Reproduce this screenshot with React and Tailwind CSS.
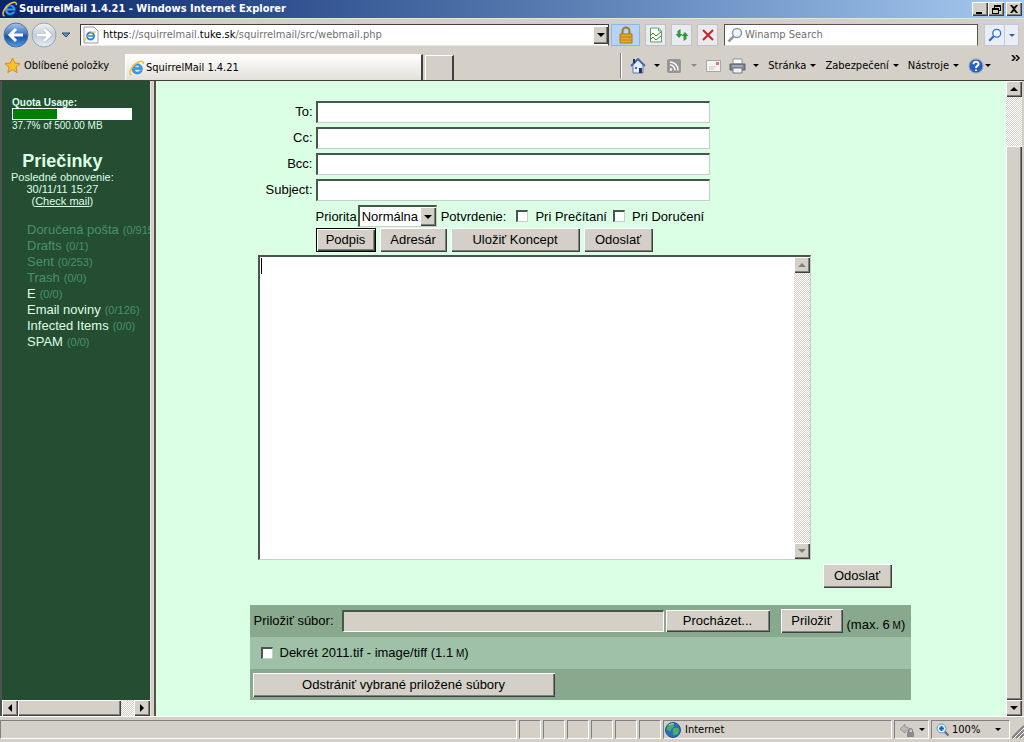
import { useState } from 'react';

const RAISED = 'bg-[#d4d0c8] shadow-[inset_1px_1px_0_#fff,inset_-1px_-1px_0_#404040,inset_-2px_-2px_0_#808080]';
const SUNKEN = 'bg-white border-t-2 border-l-2 border-t-[#46574b] border-l-[#46574b] border-b border-r border-b-[#c4cfc6] border-r-[#c4cfc6]';
const HATCH = 'bg-[repeating-conic-gradient(#fff_0_25%,#d4d0c8_0_50%)] bg-[length:2px_2px]';

const FOLDERS = [
  { name: 'Doručená pošta', count: '(0/915)', special: true },
  { name: 'Drafts', count: '(0/1)', special: true },
  { name: 'Sent', count: '(0/253)', special: true },
  { name: 'Trash', count: '(0/0)', special: true },
  { name: 'E', count: '(0/0)' },
  { name: 'Email noviny', count: '(0/126)' },
  { name: 'Infected Items', count: '(0/0)' },
  { name: 'SPAM', count: '(0/0)' },
];

const FIELDS = [
  { id: 'to', label: 'To:' },
  { id: 'cc', label: 'Cc:' },
  { id: 'bcc', label: 'Bcc:' },
  { id: 'subject', label: 'Subject:' },
];

export default function App() {
  return (
    <div className="min-h-screen flex flex-col bg-[#d4d0c8] text-black text-[11px] leading-[14px] font-['DejaVu_Sans_Condensed','DejaVu_Sans',sans-serif]">
      <TitleBar />
      <AddressBar />
      <CommandBar />
      <div className="flex-1 flex border-t border-[#404040] font-['Liberation_Sans',Arial,sans-serif]">
        <Sidebar />
        <div className="w-[6px] shrink-0 border-l border-r-2 border-l-[#e8e4dc] border-r-[#57504b]" />
        <Compose />
        <div className="w-4 shrink-0 mr-[2px] flex flex-col">
          <ScrollButton dir="up" label="Scroll up" />
          <div className={`h-[49px] ${HATCH}`} />
          <div className={`flex-1 ${RAISED}`} />
          <ScrollButton dir="down" label="Scroll down" />
        </div>
      </div>
      <StatusBar />
    </div>
  );
}

function TitleBar() {
  return (
    <header className="h-[18px] flex items-center pl-[2px] pr-[2px] bg-linear-to-r from-[#0a246a] to-[#a6caf0]">
      <IeLogo className="w-4 h-4" />
      <h1 className="ml-px flex-1 text-white font-bold whitespace-nowrap">SquirrelMail 1.4.21 - Windows Internet Explorer</h1>
      <div className="flex">
        <WindowButton label="Minimize"><path d="M3 9h6v2H3z" /></WindowButton>
        <WindowButton label="Restore"><path d="M5 2h7v6h-2V7h1V4H6v1H5zM3 5h7v6H3zm1 2v3h5V7z" fillRule="evenodd" /></WindowButton>
        <span className="w-[2px]" />
        <WindowButton label="Close"><path d="M3 2h2l2 2 2-2h2L8 6l3 4H9L7 8l-2 2H3l3-4z" /></WindowButton>
      </div>
    </header>
  );
}

function WindowButton({ label, children }) {
  return (
    <button aria-label={label} className={`w-4 h-[14px] flex items-center justify-center ${RAISED}`}>
      <svg viewBox="0 0 14 13" className="w-[14px] h-[13px]">{children}</svg>
    </button>
  );
}

function AddressBar() {
  return (
    <div className="h-[33px] flex items-center pl-[3px] pr-[5px] border-t border-[#e6e3dc]">
      <button aria-label="Back">
        <svg viewBox="0 0 26 26" className="w-[26px] h-[26px]">
          <defs>
            <linearGradient id="back" x1="0" y1="0" x2="0" y2="1">
              <stop offset="0" stopColor="#a9c8ee" />
              <stop offset=".45" stopColor="#3f77c4" />
              <stop offset=".55" stopColor="#1a4fa4" />
              <stop offset="1" stopColor="#4aa0ea" />
            </linearGradient>
          </defs>
          <circle cx="13" cy="13" r="12" fill="url(#back)" stroke="#5d7294" />
          <path d="M13 7l-6 6 6 6M7.500 13H20" stroke="#fff" strokeWidth="3" fill="none" />
        </svg>
      </button>
      <button aria-label="Forward" className="ml-[2px]">
        <svg viewBox="0 0 26 26" className="w-[26px] h-[26px]">
          <defs>
            <linearGradient id="forward" x1="0" y1="0" x2="0" y2="1">
              <stop offset="0" stopColor="#f2f5f9" />
              <stop offset=".5" stopColor="#c3ccd8" />
              <stop offset="1" stopColor="#e6edf5" />
            </linearGradient>
          </defs>
          <circle cx="13" cy="13" r="12" fill="url(#forward)" stroke="#9aa3ae" />
          <path d="M13 7l6 6-6 6M18.500 13H6" stroke="#9ba6b3" strokeWidth="4" fill="none" />
          <path d="M13 7l6 6-6 6M18.500 13H6" stroke="#fff" strokeWidth="3" fill="none" />
        </svg>
      </button>
      <button aria-label="Recent pages" className="ml-1">
        <svg viewBox="0 0 10 6" className="w-[10px] h-[6px]"><path d="M1 1h8L5 5z" fill="#5b9bd0" stroke="#24486f" /></svg>
      </button>

      <div className="ml-[9px] flex-1 h-[22px] flex items-center bg-white border border-[#404040] border-b-[#e8e8e8]">
        <svg viewBox="0 0 16 18" className="w-4 h-[18px] ml-[2px] shrink-0">
          <path d="M1 1h10l4 4v12H1z" fill="#fff" stroke="#9a9a9a" />
          <circle cx="7.500" cy="10" r="3.500" fill="none" stroke="#2f86cf" strokeWidth="2" />
          <path d="M4 10h7" stroke="#2f86cf" strokeWidth="1.500" />
          <path d="M2 15C2 11 8 5 13 6" stroke="#e5b93a" fill="none" />
        </svg>
        <div className="ml-1 flex-1 whitespace-nowrap text-[#707070]">
          <span className="text-black">https</span>://squirrelmail.<span className="text-black">tuke.sk</span>/squirrelmail/src/webmail.php
        </div>
        <button aria-label="Show addresses" className={`w-[15px] h-[18px] flex items-center justify-center ${RAISED}`}>
          <Arrow />
        </button>
      </div>
      <button aria-label="Security report" className="ml-[2px] w-[29px] h-[22px] flex items-center justify-center bg-[#b5d4f8] border border-[#8fb6e6]">
        <svg viewBox="0 0 14 18" className="w-[14px] h-[18px]">
          <path d="M3.500 9V5a3.500 3.500 0 017 0v4" fill="none" stroke="#a87b1a" strokeWidth="2" />
          <path d="M1 8h12v9H1z" fill="#e7ac2e" stroke="#a97612" />
          <path d="M1.500 11h11M1.500 14h11" stroke="#b98018" />
        </svg>
      </button>
      <ToolButton label="Compatibility view">
        <path d="M2.500 1h8l3 3v11h-11z" fill="#fff" stroke="#5aa35b" />
        <path d="M10.500 1v3h3" fill="none" stroke="#5aa35b" />
        <path d="M2 9l3-3 3 3 5-4M2 13l3-3 3 3 5-4" stroke="#2f8a35" fill="none" />
      </ToolButton>
      <ToolButton label="Refresh">
        <path d="M6.500 2l-3 2v3h-2L5 11l3.500-4h-2z" fill="#2f9a3a" />
        <path d="M9.500 14l3-2V9h2L11 5 7.500 9h2z" fill="#2f9a3a" />
      </ToolButton>
      <ToolButton label="Stop">
        <path d="M3 3l10 10M13 3L3 13" stroke="#c8242c" strokeWidth="2" />
      </ToolButton>

      <label className="ml-[6px] w-[254px] h-[22px] flex items-center bg-white border border-[#555] border-b-[#ddd]">
        <Magnifier className="w-4 h-4 ml-[2px]" color="#8f9aa8" />
        <input aria-label="Search" placeholder="Winamp Search" className="ml-[2px] flex-1 min-w-0 outline-none placeholder:text-[#707070]" />
      </label>
      <div className="ml-[6px] h-[22px] flex bg-[#e9edf6] border border-[#c2c8d6]">
        <button aria-label="Run search" className="w-5 flex items-center justify-center border-r border-[#c2c8d6]">
          <Magnifier className="w-[14px] h-[14px]" color="#2c6cc4" />
        </button>
        <button aria-label="Search options" className="w-[13px] flex items-center justify-center text-[#3b5f92]"><SmallArrow /></button>
      </div>
    </div>
  );
}

function ToolButton({ label, children }) {
  return (
    <button aria-label={label} className="ml-[5px] w-[21px] h-[22px] flex items-center justify-center bg-[#e9ebf0] border border-[#bfc2c8]">
      <svg viewBox="0 0 16 16" className="w-4 h-4">{children}</svg>
    </button>
  );
}

function CommandBar() {
  return (
    <div className="h-[29px] flex items-stretch pl-1">
      <button className="w-[117px] flex items-center whitespace-nowrap">
        <svg viewBox="0 0 17 17" className="w-[17px] h-[17px]">
          <path d="M8.500 1l2.200 5 5.300.6-4 3.600 1.200 5.300-4.700-2.800-4.700 2.800L5 10.200 1 6.600 6.300 6z" fill="#fbc02d" stroke="#d88b10" />
        </svg>
        <span className="ml-[3px]">Oblíbené položky</span>
      </button>
      <div className="ml-1 mt-[3px] w-[298px] flex items-center bg-linear-to-b from-white to-[#e3dfd8] border-t border-l border-white border-r-2 border-r-[#404040]">
        <IeLogo className="w-4 h-4 ml-[3px]" />
        <span className="ml-px">SquirrelMail 1.4.21</span>
      </div>
      <button aria-label="New tab" className="ml-[2px] mt-1 w-[29px] border-t border-l border-white border-r-2 border-r-[#404040]" />
      <div className="flex-1" />
      <div className="my-[2px] w-[2px] border-l border-[#808080] bg-white" />
      <div className="flex items-center pl-2">
        <button aria-label="Home" className="flex items-center">
          <svg viewBox="0 0 16 16" className="w-4 h-4">
            <path d="M3 7v8h10V7L8 2z" fill="#e4ecfb" stroke="#6077a8" />
            <path d="M1 8l7-7 7 7" fill="none" stroke="#4a69b4" strokeWidth="2" />
            <path d="M3 1h2v4H3z" fill="#26345f" />
            <path d="M9 10h3v5H9z" fill="#26345f" />
            <path d="M5 9h2v2H5z" fill="#3d65b5" />
          </svg>
          <span className="ml-2"><SmallArrow /></span>
        </button>
        <button aria-label="Feeds" className="ml-[7px] flex items-center text-[#8a8a8a]">
          <svg viewBox="0 0 14 14" className="w-[14px] h-[14px]">
            <rect width="14" height="14" rx="2" fill="#969696" />
            <circle cx="4" cy="10.500" r="1.300" fill="#fff" />
            <path d="M3 6a5 5 0 015 5.500M3 3a8 8 0 018 8.500" stroke="#fff" strokeWidth="1.500" fill="none" />
          </svg>
          <span className="ml-[10px]"><SmallArrow /></span>
        </button>
        <button aria-label="Read mail" className="ml-[9px]">
          <svg viewBox="0 0 15 12" className="w-[15px] h-3">
            <path d="M.5.5h14v11H.5z" fill="#f4f2f2" stroke="#a9a5a5" />
            <path d="M10 2h3v3h-3z" fill="#d9737a" />
            <path d="M3 7h6M3 9h5" stroke="#c6c6cf" />
          </svg>
        </button>
        <button aria-label="Print" className="ml-2 flex items-center">
          <svg viewBox="0 0 17 16" className="w-[17px] h-4">
            <path d="M4 1h9v5H4z" fill="#fff" stroke="#8d949c" />
            <path d="M1 6h15v6H1z" fill="#7c848e" stroke="#5c636c" />
            <path d="M3 8h11" stroke="#c8ced6" />
            <path d="M4 10h9v5H4z" fill="#eef4ff" stroke="#737b86" />
          </svg>
          <span className="ml-[7px]"><SmallArrow /></span>
        </button>
        <MenuButton>Stránka</MenuButton>
        <MenuButton>Zabezpečení</MenuButton>
        <MenuButton>Nástroje</MenuButton>
        <button aria-label="Help" className="ml-[9px] flex items-center">
          <svg viewBox="0 0 16 16" className="w-4 h-4">
            <circle cx="8" cy="8" r="7" fill="#2a5fc0" stroke="#8fa6cf" />
            <path d="M5.500 6.200C5.500 3 10.500 3 10.500 6 10.500 8 8 7.800 8 10M8 11.500v1.500" stroke="#fff" strokeWidth="2" fill="none" />
          </svg>
          <span className="ml-px"><SmallArrow /></span>
        </button>
      </div>
      <button aria-label="More commands" className="ml-5 mr-1 self-start mt-1">
        <svg viewBox="0 0 9 6" className="w-[9px] h-[6px]"><path d="M1 0l3 3-3 3M5 0l3 3-3 3" stroke="#000" strokeWidth="1.500" fill="none" /></svg>
      </button>
    </div>
  );
}

function MenuButton({ children }) {
  return (
    <button className="ml-[9px] flex items-center gap-1 whitespace-nowrap">
      {children}
      <SmallArrow />
    </button>
  );
}

function Sidebar() {
  return (
    <aside className="w-[150px] shrink-0 overflow-hidden flex flex-col bg-[#254d32] border-l-2 border-l-[#4b554d] text-[#dcffe6]">
      <div className="flex-1 pt-4 pl-[9px]">
        <div className="ml-px text-[10px] leading-[11px]">
          <div className="font-bold">Quota Usage:</div>
          <div className="w-[120px] h-3 p-px bg-white">
            <div className="h-full bg-[#008000]" style={{ width: '37.7%' }} />
          </div>
          <div className="leading-3">37.7% of 500.00 MB</div>
        </div>

        <div className="mt-[19px] w-fit text-center text-[11px] leading-3">
          <h2 className="text-[18px] leading-5 font-bold">Priečinky</h2>
          <div>Posledné obnovenie:</div>
          <div>30/11/11 15:27</div>
          <div>(<a href="#check" className="underline">Check mail</a>)</div>
        </div>

        <ul className="mt-[15px] ml-4 text-[13px] leading-4 whitespace-nowrap">
          {FOLDERS.map((f) => (
            <li key={f.name}>
              <a href="#folder" className={f.special ? 'text-[#46916e]' : ''}>{f.name}</a>
              <span className="ml-1 text-[11px] text-[#46916e]">{f.count}</span>
            </li>
          ))}
        </ul>
      </div>
      <div className="h-4 flex">
        <ScrollButton dir="left" label="Scroll left" />
        <div className={`w-[103px] ${RAISED}`} />
        <div className={`flex-1 ${HATCH}`} />
        <ScrollButton dir="right" label="Scroll right" />
      </div>
    </aside>
  );
}

function Compose() {
  const [priority, setPriority] = useState('normal');
  const [body, setBody] = useState('');

  return (
    <main className="flex-1 min-w-0 pt-5 pb-4 pr-[2px] bg-[#dbffe5] text-[13px] leading-4">
      <form className="w-full max-w-[661px] mx-auto" onSubmit={(e) => e.preventDefault()}>
        <div className="flex flex-col gap-1">
          {FIELDS.map((f) => (
            <div key={f.id} className="flex items-center">
              <label htmlFor={f.id} className="w-16 pr-px text-right">{f.label}</label>
              <input id={f.id} className={`ml-[2px] w-[394px] h-[22px] px-1 outline-none ${SUNKEN}`} />
            </div>
          ))}
        </div>

        <div className="mt-1 pl-[66px] flex items-center whitespace-nowrap">
          <label htmlFor="priority" className="pt-[2px]">Priorita</label>
          <div className={`ml-px w-[79px] h-[22px] flex ${SUNKEN}`}>
            <select
              id="priority"
              value={priority}
              onChange={(e) => setPriority(e.target.value)}
              className="flex-1 min-w-0 pl-[2px] appearance-none outline-none"
            >
              <option value="normal">Normálna</option>
            </select>
            <span className={`w-4 flex items-center justify-center ${RAISED}`}><Arrow /></span>
          </div>
          <span className="ml-1 pt-[2px]">Potvrdenie:</span>
          <Checkbox id="on-read" className="ml-[10px] mr-[7px]" />
          <label htmlFor="on-read" className="pt-[2px]">Pri Prečítaní</label>
          <Checkbox id="on-delivery" className="ml-[6px] mr-[7px]" />
          <label htmlFor="on-delivery" className="pt-[2px]">Pri Doručení</label>
        </div>

        <div className="mt-px pl-[66px] flex gap-1">
          <button className="w-[60px] h-6 bg-[#d4d0c8] border border-black shadow-[inset_1px_1px_0_#fff,inset_-1px_-1px_0_#404040,inset_-2px_-2px_0_#808080]">Podpis</button>
          <Button className="w-[67px]">Adresár</Button>
          <Button className="w-[129px]">Uložiť Koncept</Button>
          <Button className="w-[69px]">Odoslať</Button>
        </div>

        <div className={`relative mt-[3px] ml-2 w-[553px] h-[305px] flex ${SUNKEN}`}>
          {/* text cursor */}
          {body === '' && <span className="absolute left-px top-px w-px h-4 bg-black" />}
          <textarea
            aria-label="Message"
            value={body}
            onChange={(e) => setBody(e.target.value)}
            className="flex-1 resize-none outline-none pl-px"
          />
          <div className="w-4 flex flex-col">
            <ScrollButton dir="up" label="Scroll message up" disabled />
            <div className={`flex-1 ${HATCH}`} />
            <ScrollButton dir="down" label="Scroll message down" disabled />
          </div>
        </div>

        <div className="mt-1 pr-[19px] flex justify-end">
          <Button className="w-[69px]">Odoslať</Button>
        </div>

        <div className="mt-[17px] bg-[#89a98f]">
          <div className="h-8 pl-1 flex items-center whitespace-nowrap">
            <label htmlFor="attachment" className="w-[88px]">Priložiť súbor:</label>
            <input id="attachment" readOnly className="w-[322px] h-[22px] px-1 outline-none bg-[#d4d0c8] border-t-2 border-l-2 border-t-[#46574b] border-l-[#46574b] border-b border-r border-b-white border-r-white" />
            <button className={`ml-[2px] w-[104px] h-[22px] ${RAISED}`}>Procházet...</button>
            <Button className="ml-[11px] w-[62px]">Priložiť</Button>
            <span className="ml-1 pt-2">(max. 6<span className="text-[10px]"> M</span>)</span>
          </div>
          <div className="h-8 pl-[11px] flex items-center bg-[#9ec1a8]">
            <Checkbox id="dekret" className="mr-[7px]" />
            <label htmlFor="dekret">Dekrét 2011.tif - image/tiff (1.1<span className="text-[10px]"> M</span>)</label>
          </div>
          <div className="h-[31px] pl-[3px] flex items-center">
            <Button className="w-[302px]">Odstrániť vybrané priložené súbory</Button>
          </div>
        </div>
      </form>
    </main>
  );
}

function Button({ className, children }) {
  return <button className={`h-6 text-center whitespace-nowrap ${RAISED} ${className}`}>{children}</button>;
}

function Checkbox({ id, className }) {
  return <input type="checkbox" id={id} className={`w-3 h-3 appearance-none checked:bg-[#254d32] ${SUNKEN} ${className}`} />;
}

function StatusBar() {
  return (
    <footer className="h-[26px] pt-[3px] pb-[3px] flex items-stretch gap-[2px] border-t border-white">
      <StatusPanel className="flex-1" />
      {[1, 2, 3, 4, 5, 6].map((n) => <StatusPanel key={n} className="w-[22px]" />)}
      <StatusPanel className="w-[229px] pl-px">
        <svg viewBox="0 0 16 16" className="w-4 h-4">
          <circle cx="8" cy="8" r="7.500" fill="#2a6fbd" stroke="#245089" />
          <path d="M3 3c3-2 6-1 6 1S6 6 6 8 3 9 1.500 7zM10 6c3-1 4 1 4 3s-3 5-5 4 0-3-1-4 0-3 2-3z" fill="#4cb062" />
          <path d="M4 3c2-1.500 4-1.500 5-1" stroke="#c4e3f7" fill="none" />
        </svg>
        <span className="ml-1">Internet</span>
      </StatusPanel>
      <StatusPanel className="w-[35px] pl-1">
        <svg viewBox="0 0 16 16" className="w-4 h-4">
          <path d="M1 7l5-5v3c4 0 5 2 5 4H6v2z" fill="#b9b9b9" stroke="#9a9a9a" />
          <path d="M9.500 10V8.500a2 2 0 014 0V10" stroke="#777" fill="none" />
          <path d="M8 10h7v5H8z" fill="#8b8b8b" />
        </svg>
        <span className="ml-1"><SmallArrow /></span>
      </StatusPanel>
      <StatusPanel className="w-[79px] pl-1">
        <svg viewBox="0 0 14 14" className="w-[14px] h-[14px]">
          <path d="M8.500 8.500l4 4" stroke="#5b6b86" strokeWidth="2" />
          <circle cx="5.500" cy="5.500" r="4.500" fill="#e5f3ff" stroke="#5d94cc" />
          <path d="M5.500 3v5M3 5.500h5" stroke="#1565c0" strokeWidth="2" />
        </svg>
        <span className="ml-[2px] flex-1">100%</span>
        <span className="mr-2"><SmallArrow /></span>
      </StatusPanel>
      <svg viewBox="0 0 12 16" className="w-3 h-4 self-end">
        <path d="M0 15L12 3M4 15l8-8M8 15l4-4" stroke="#808080" strokeWidth="2" />
        <path d="M1 16L12 5M5 16l7-7M9 16l3-3" stroke="#fff" />
      </svg>
    </footer>
  );
}

function StatusPanel({ className, children }) {
  return <div className={`flex items-center whitespace-nowrap border border-t-[#808080] border-l-[#808080] border-b-white border-r-white ${className}`}>{children}</div>;
}

const ARROWS = {
  up: 'M4 2l4 4H0z',
  down: 'M0 2h8L4 6z',
  left: 'M6 0v8L2 4z',
  right: 'M2 0l4 4-4 4z',
};

function ScrollButton({ dir, label, disabled }) {
  return (
    <button type="button" aria-label={label} disabled={disabled} className={`w-4 h-4 shrink-0 flex items-center justify-center text-black disabled:text-[#808080] ${RAISED}`}>
      <svg viewBox="0 0 8 8" className="w-2 h-2" fill="currentColor"><path d={ARROWS[dir]} /></svg>
    </button>
  );
}

function Arrow() {
  return <svg viewBox="0 0 8 8" className="w-2 h-2"><path d={ARROWS.down} /></svg>;
}

function SmallArrow() {
  return <svg viewBox="0 0 6 3" className="w-[6px] h-[3px]" fill="currentColor"><path d="M0 0h6L3 3z" /></svg>;
}

function Magnifier({ className, color }) {
  return (
    <svg viewBox="0 0 16 16" className={className}>
      <path d="M6.500 9.500L1.500 14.500" stroke={color} strokeWidth="2.500" />
      <circle cx="10" cy="6" r="4.500" fill="#eef6ff" stroke={color} strokeWidth="1.500" />
    </svg>
  );
}

function IeLogo({ className }) {
  return (
    <svg viewBox="0 0 16 16" className={className}>
      <path d="M13.500 9.500H5.500c.3 3 4.200 3.300 5.200 1.200h2.600c-2 5-10.300 4.300-10.300-2C3 2 13.800 2 13.500 9.500zM5.600 7.500h5.200c-.3-2.600-4.800-2.600-5.200 0z" fill="#39a0ea" stroke="#1a6fbe" strokeWidth=".5" fillRule="evenodd" />
      <path d="M2.500 15C-1.500 14 3 4.500 9.500 2c4-1.600 5.500-.3 4.700 2" fill="none" stroke="#f0c23c" strokeWidth="1.500" />
    </svg>
  );
}
